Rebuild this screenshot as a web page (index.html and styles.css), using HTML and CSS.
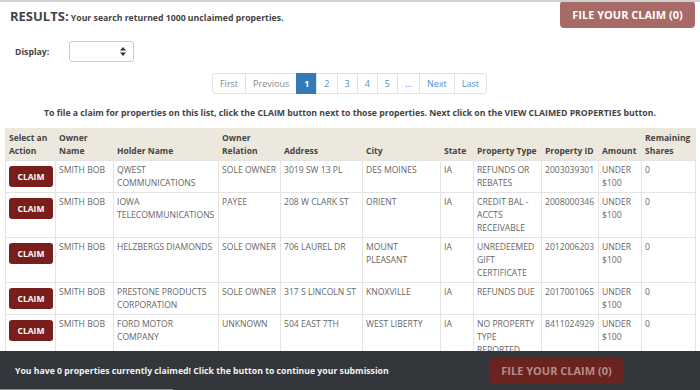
FILE: index.html
```html
<!DOCTYPE html>
<html lang="en">

<head>
    <meta charset="UTF-8">
    <meta name="viewport" content="width=device-width, initial-scale=1.0">
    <title>Unclaimed Property Search Results</title>
    <link rel="stylesheet" href="styles.css">
</head>

<body>

    <div class="top">
        <h2 class="results"><span class="results-title">RESULTS:</span> Your search returned 1000 unclaimed properties.</h2>
        <button class="file-btn">FILE YOUR CLAIM (0)</button>
    </div>

    <div class="display-row">
        <label for="display">Display:</label>
        <div class="select-box" id="display">
            <svg width="6" height="9" viewBox="0 0 6 9"><path d="M3 0 L6 3.5 H0 Z M3 9 L0 5.5 H6 Z" fill="#333"/></svg>
        </div>
    </div>

    <div class="pager">
        <a class="disabled">First</a>
        <a class="disabled">Previous</a>
        <a class="active">1</a>
        <a>2</a>
        <a>3</a>
        <a>4</a>
        <a>5</a>
        <a>...</a>
        <a>Next</a>
        <a>Last</a>
    </div>

    <p class="hint">To file a claim for properties on this list, click the CLAIM button next to those properties. Next click on the VIEW CLAIMED PROPERTIES button.</p>

    <table class="props">
        <colgroup>
            <col style="width: 50px">
            <col style="width: 58px">
            <col style="width: 105px">
            <col style="width: 62px">
            <col style="width: 82px">
            <col style="width: 78px">
            <col style="width: 33px">
            <col style="width: 68px">
            <col style="width: 57px">
            <col style="width: 43px">
            <col style="width: 54px">
        </colgroup>
        <thead>
            <tr>
                <th>Select an Action</th>
                <th>Owner Name</th>
                <th>Holder Name</th>
                <th>Owner Relation</th>
                <th>Address</th>
                <th>City</th>
                <th>State</th>
                <th>Property Type</th>
                <th>Property ID</th>
                <th>Amount</th>
                <th>Remaining Shares</th>
            </tr>
        </thead>
        <tbody>
            <tr>
                <td><button class="claim">CLAIM</button></td>
                <td>SMITH BOB</td>
                <td>QWEST COMMUNICATIONS</td>
                <td>SOLE OWNER</td>
                <td>3019 SW 13 PL</td>
                <td>DES MOINES</td>
                <td>IA</td>
                <td>REFUNDS OR REBATES</td>
                <td>2003039301</td>
                <td>UNDER $100</td>
                <td>0</td>
            </tr>
            <tr>
                <td><button class="claim">CLAIM</button></td>
                <td>SMITH BOB</td>
                <td>IOWA TELECOMMUNICATIONS</td>
                <td>PAYEE</td>
                <td>208 W CLARK ST</td>
                <td>ORIENT</td>
                <td>IA</td>
                <td>CREDIT BAL - ACCTS RECEIVABLE</td>
                <td>2008000346</td>
                <td>UNDER $100</td>
                <td>0</td>
            </tr>
            <tr>
                <td><button class="claim">CLAIM</button></td>
                <td>SMITH BOB</td>
                <td>HELZBERGS DIAMONDS</td>
                <td>SOLE OWNER</td>
                <td>706 LAUREL DR</td>
                <td>MOUNT PLEASANT</td>
                <td>IA</td>
                <td>UNREDEEMED GIFT CERTIFICATE</td>
                <td>2012006203</td>
                <td>UNDER $100</td>
                <td>0</td>
            </tr>
            <tr>
                <td><button class="claim">CLAIM</button></td>
                <td>SMITH BOB</td>
                <td>PRESTONE PRODUCTS CORPORATION</td>
                <td>SOLE OWNER</td>
                <td>317 S LINCOLN ST</td>
                <td>KNOXVILLE</td>
                <td>IA</td>
                <td>REFUNDS DUE</td>
                <td>2017001065</td>
                <td>UNDER $100</td>
                <td>0</td>
            </tr>
            <tr>
                <td><button class="claim">CLAIM</button></td>
                <td>SMITH BOB</td>
                <td>FORD MOTOR COMPANY</td>
                <td>UNKNOWN</td>
                <td>504 EAST 7TH</td>
                <td>WEST LIBERTY</td>
                <td>IA</td>
                <td>NO PROPERTY TYPE REPORTED</td>
                <td>8411024929</td>
                <td>UNDER $100</td>
                <td>0</td>
            </tr>
        </tbody>
    </table>

    <div class="footer-bar">
        <span class="footer-text">You have 0 properties currently claimed! Click the button to continue your submission</span>
        <button class="footer-btn">FILE YOUR CLAIM (0)</button>
    </div>

</body>

</html>
```

FILE: styles.css
```css
body {
    font-family: "Open Sans", Arial, sans-serif;
    margin: 0;
    border-top: 2px solid #d0d0d0;
    color: #555;
    background-color: #fff;
}

.top {
    display: flex;
    justify-content: space-between;
    align-items: flex-start;
    padding: 0 5px 0 10px;
}

.results {
    margin: 5px 0 0 0;
    font-size: 8.7px;
    font-weight: bold;
    color: #444;
}

.results-title {
    font-size: 13px;
}

.file-btn {
    font-family: "Open Sans", Arial, sans-serif;
    background-color: #a86a66;
    color: #fff;
    border: none;
    border-radius: 4px;
    font-weight: bold;
    font-size: 11px;
    width: 135px;
    height: 27px;
    margin-top: -1px;
    cursor: pointer;
}

.display-row {
    display: flex;
    align-items: center;
    padding: 13px 0 0 15px;
}

.display-row label {
    font-size: 8.7px;
    font-weight: bold;
    color: #444;
    width: 54px;
}

.select-box {
    width: 65px;
    height: 21px;
    box-sizing: border-box;
    border: 1px solid #ccc;
    border-radius: 3px;
    display: flex;
    justify-content: flex-end;
    align-items: center;
    padding-right: 7px;
}

.pager {
    display: flex;
    justify-content: center;
    margin-top: 11px;
}

.pager a {
    font-size: 9px;
    line-height: 19px;
    padding: 0 7px;
    color: #4a90d6;
    border: 1px solid #e2e2e2;
    margin-left: -1px;
}

.pager a:first-child {
    border-radius: 3px 0 0 3px;
}

.pager a:last-child {
    border-radius: 0 3px 3px 0;
}

.pager .disabled {
    color: #888;
}

.pager .active {
    background-color: #337ab7;
    border-color: #337ab7;
    color: #fff;
    font-weight: bold;
}

.hint {
    text-align: center;
    font-size: 8.7px;
    font-weight: bold;
    color: #444;
    margin: 13px 0 9px 0;
}

.props {
    table-layout: fixed;
    border-collapse: collapse;
    width: 690px;
    margin-left: 5px;
    font-size: 8.6px;
    line-height: 13px;
}

.props th {
    background-color: #ece8dd;
    color: #444;
    font-size: 8.5px;
    font-weight: bold;
    text-align: left;
    vertical-align: bottom;
    padding: 3px 2px 3px 3px;
    border-left: 1px solid #ece8dd;
}

.props td {
    vertical-align: top;
    padding: 3px 2px 2px 3px;
    border: 1px solid #e4e4e4;
    color: #666;
}

.claim {
    font-family: "Open Sans", Arial, sans-serif;
    background-color: #7a1e1b;
    color: #fff;
    border: none;
    border-radius: 3px;
    font-size: 8.5px;
    font-weight: bold;
    width: 44px;
    height: 21px;
    margin-top: 2px;
    cursor: pointer;
}

.footer-bar {
    position: fixed;
    left: 0;
    right: 0;
    bottom: 0;
    height: 39px;
    background-color: #33373c;
    display: flex;
    align-items: center;
    padding-left: 15px;
}

.footer-bar::after {
    content: "";
    position: absolute;
    left: 0;
    bottom: 0;
    width: 173px;
    height: 1px;
    background-color: #8a8c8f;
}

.footer-text {
    color: #f2f2f2;
    font-size: 8.7px;
    font-weight: bold;
    width: 475px;
}

.footer-btn {
    font-family: "Open Sans", Arial, sans-serif;
    background-color: #6b2320;
    color: #b48c8a;
    border: none;
    border-radius: 4px;
    font-weight: bold;
    font-size: 11px;
    width: 133px;
    height: 26px;
    cursor: pointer;
}
```
